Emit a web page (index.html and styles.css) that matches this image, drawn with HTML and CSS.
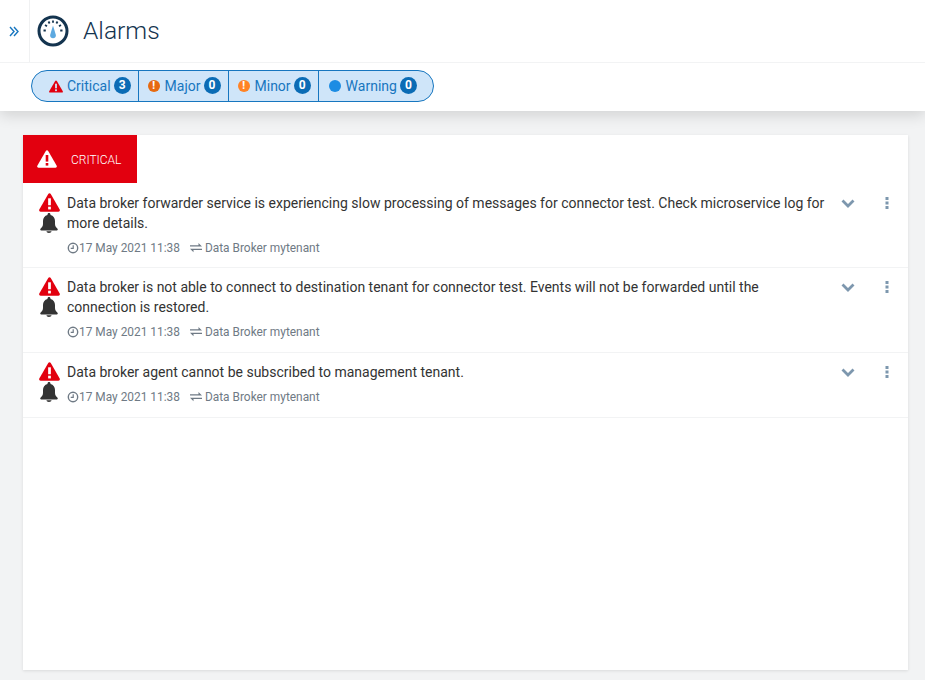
FILE: index.html
```html
<!DOCTYPE html>
<html lang="en">
<head>
<meta charset="utf-8">
<title>Alarms</title>
<link rel="stylesheet" href="styles.css">
<svg class="defs" width="0" height="0">
  <symbol id="tri" viewBox="0 0 20 18"><path d="M10 0.300c.5 0 .9.3 1.200.7l8.500 14.700c.5.900-.1 2-1.200 2H1.500c-1.100 0-1.700-1.100-1.200-2L8.800 1c.3-.4.7-.7 1.200-.7z" fill="currentColor"/><rect x="8.700" y="5" width="2.600" height="6.600" fill="var(--mark)"/><rect x="8.700" y="13" width="2.600" height="2.600" fill="var(--mark)"/></symbol>
  <symbol id="bell" viewBox="0 0 20 20"><path d="M10 0c.9 0 1.500.6 1.500 1.500v.5c2.900.7 4.500 3 4.500 6v3c0 2 1.200 3.500 2.500 4.800.6.600.2 1.700-.7 1.700H2.200c-.9 0-1.300-1.100-.7-1.700C2.800 14.500 4 13 4 11V8c0-3 1.600-5.300 4.500-6v-.5C8.500.6 9.100 0 10 0zM7.500 18.300h5c0 1-1.100 1.700-2.500 1.700s-2.500-.7-2.500-1.700z" fill="currentColor"/></symbol>
  <symbol id="clock" viewBox="0 0 12 12"><circle cx="6" cy="6" r="4.700" fill="none" stroke="currentColor" stroke-width="1.400"/><path d="M6.200 3.200v3.100H3.700" fill="none" stroke="currentColor" stroke-width="1.200"/></symbol>
  <symbol id="swap" viewBox="0 0 12 10"><path d="M0 2.200h8.500V0L12 3.400H0zM12 5.800H0L3.500 9.200V7h8.500z" fill="currentColor"/></symbol>
  <symbol id="chev" viewBox="0 0 14 9"><path d="M1.500 1.500L7 7l5.500-5.500" fill="none" stroke="currentColor" stroke-width="2.800"/></symbol>
  <symbol id="dots" viewBox="0 0 4 12"><rect x="0.500" y="0" width="3" height="3" fill="currentColor"/><rect x="0.500" y="4.500" width="3" height="3" fill="currentColor"/><rect x="0.500" y="9" width="3" height="3" fill="currentColor"/></symbol>
</svg>
</head>
<body>
<header class="topbar">
  <div class="title-row">
    <button class="toggle" type="button">
      <svg width="10" height="11" viewBox="0 0 10 11"><path d="M1 1l4 4.500-4 4.500M5 1l4 4.500-4 4.500" fill="none" stroke="currentColor" stroke-width="1.400"/></svg>
    </button>
    <svg class="gauge" width="32" height="32" viewBox="0 0 32 32">
      <circle cx="16" cy="16" r="14" fill="none" stroke="#14344f" stroke-width="3"/>
      <path d="M6.500 15.500h2.300M8 10l2 1.200M11.500 6.500l1.100 2M16 5.500v2.300M20.500 6.500l-1.100 2M24 10l-2 1.200M25.500 15.500h-2.300" stroke="#14344f" stroke-width="1.800" fill="none"/>
      <path d="M16 10.500l2.800 9.200a2.900 2.900 0 1 1-5.600 0z" fill="#5da9e0"/>
    </svg>
    <h1 class="title">Alarms</h1>
  </div>
  <div class="filter-row">
    <div class="filters">
      <div class="filter first"><svg class="f-tri" width="14" height="13"><use href="#tri"/></svg><span>Critical</span><b class="count">3</b></div>
      <div class="filter"><span class="dot major">!</span><span>Major</span><b class="count">0</b></div>
      <div class="filter"><span class="dot minor">!</span><span>Minor</span><b class="count">0</b></div>
      <div class="filter last"><span class="dot warn"></span><span>Warning</span><b class="count">0</b></div>
    </div>
  </div>
</header>
<main class="content">
  <section class="card">
    <div class="badge"><svg class="b-tri" width="20" height="18"><use href="#tri"/></svg><span>CRITICAL</span></div>
    <article class="alarm">
      <div class="icons"><svg class="i-tri" width="21" height="19"><use href="#tri"/></svg><svg class="i-bell" width="20" height="20"><use href="#bell"/></svg></div>
      <div class="body">
        <p class="msg">Data broker forwarder service is experiencing slow processing of messages for connector test. Check microservice log for more details.</p>
        <p class="meta"><svg class="m-clock" width="12" height="12"><use href="#clock"/></svg>17 May 2021 11:38<svg class="m-swap" width="12" height="10"><use href="#swap"/></svg>Data Broker mytenant</p>
      </div>
      <svg class="chev" width="14" height="9"><use href="#chev"/></svg>
      <svg class="dots" width="4" height="12"><use href="#dots"/></svg>
    </article>
    <article class="alarm">
      <div class="icons"><svg class="i-tri" width="21" height="19"><use href="#tri"/></svg><svg class="i-bell" width="20" height="20"><use href="#bell"/></svg></div>
      <div class="body">
        <p class="msg">Data broker is not able to connect to destination tenant for connector test. Events will not be forwarded until the connection is restored.</p>
        <p class="meta"><svg class="m-clock" width="12" height="12"><use href="#clock"/></svg>17 May 2021 11:38<svg class="m-swap" width="12" height="10"><use href="#swap"/></svg>Data Broker mytenant</p>
      </div>
      <svg class="chev" width="14" height="9"><use href="#chev"/></svg>
      <svg class="dots" width="4" height="12"><use href="#dots"/></svg>
    </article>
    <article class="alarm">
      <div class="icons"><svg class="i-tri" width="21" height="19"><use href="#tri"/></svg><svg class="i-bell" width="20" height="20"><use href="#bell"/></svg></div>
      <div class="body">
        <p class="msg">Data broker agent cannot be subscribed to management tenant.</p>
        <p class="meta"><svg class="m-clock" width="12" height="12"><use href="#clock"/></svg>17 May 2021 11:38<svg class="m-swap" width="12" height="10"><use href="#swap"/></svg>Data Broker mytenant</p>
      </div>
      <svg class="chev" width="14" height="9"><use href="#chev"/></svg>
      <svg class="dots" width="4" height="12"><use href="#dots"/></svg>
    </article>
  </section>
</main>
</body>
</html>
```
FILE: styles.css
```css
* { box-sizing: border-box; }
html, body { height: 100%; }
body {
  margin: 0;
  background: #f2f3f4;
  font-family: Roboto, "Liberation Sans", sans-serif;
  color: #333;
  overflow: hidden;
}
.defs { position: absolute; }
.topbar {
  background: #fff;
  height: 111px;
  box-shadow: 0 4px 14px rgba(0, 0, 0, 0.14);
}
.title-row {
  display: flex;
  align-items: center;
  height: 63px;
  border-bottom: 1px solid #f2f3f4;
}
.toggle {
  width: 30px;
  height: 62px;
  padding: 0 1px 0 0;
  border: 0;
  border-right: 1px solid #f0f1f2;
  background: none;
  color: #1776bf;
  display: flex;
  align-items: center;
  justify-content: center;
}
.gauge { margin-left: 7px; }
.title {
  margin: 0 0 0 14px;
  font-size: 24.6px;
  font-weight: 300;
  color: #14344f;
  line-height: 32px;
}
.filter-row { padding: 7px 0 0 31px; }
.filters {
  display: inline-flex;
  height: 32px;
  border: 1px solid #1776bf;
  border-radius: 16px;
  background: #cfe5f9;
}
.filter {
  display: flex;
  align-items: center;
  height: 30px;
  padding: 0 7px 0 9px;
  border-left: 1px solid #1776bf;
  font-size: 14px;
  color: #1776bf;
  white-space: nowrap;
}
.filter.first { border-left: 0; padding-left: 17px; padding-right: 7px; }
.filter.last { padding-left: 10px; padding-right: 16px; }
.f-tri { color: #e2000f; --mark: #cfe5f9; margin-right: 4px; }
.count {
  width: 17px;
  height: 17px;
  margin-left: 3px;
  margin-top: -2px;
  border-radius: 50%;
  background: #0b6cb5;
  color: #fff;
  font-size: 12px;
  font-weight: 700;
  line-height: 17px;
  text-align: center;
}
.dot {
  width: 12px;
  height: 12px;
  margin-right: 5px;
  border-radius: 50%;
  color: #fff;
  font-size: 10px;
  font-weight: 900;
  line-height: 12px;
  text-align: center;
}
.major { background: #e66a10; }
.minor { background: #ff8326; }
.warn { background: #1c8ce3; }
.content { padding: 24px 17px 10px 23px; height: 569px; }
.card {
  height: 100%;
  background: #fff;
  box-shadow: 0 1px 3px rgba(0, 0, 0, 0.1);
}
.badge {
  display: flex;
  align-items: center;
  width: 114px;
  height: 48px;
  padding-left: 14px;
  background: #e2000f;
  color: #fff;
  font-size: 12px;
  font-weight: 300;
  --mark: #e2000f;
}
.badge span { margin: 1px 0 0 14px; }
.alarm {
  display: flex;
  align-items: flex-start;
  padding: 9.6px 0 11.25px 16px;
  border-bottom: 1px solid #f2f3f4;
}
.icons {
  display: flex;
  flex-direction: column;
  width: 21px;
  flex: none;
}
.i-tri { color: #e2000f; --mark: #fff; }
.i-bell { color: #333; margin-top: 1px; }
.body { margin-left: 7px; width: 762px; flex: none; }
.msg {
  margin: 0;
  font-size: 14px;
  line-height: 20px;
  color: #333;
}
.meta {
  display: flex;
  align-items: center;
  margin: 7px 0 0;
  height: 16px;
  font-size: 11.9px;
  color: #6f7a85;
}
.m-clock { margin-right: 0; }
.m-swap { margin: 0 3px 0 10px; }
.chev { flex: none; margin: 6px 0 0 12px; color: #7d97ae; }
.dots { flex: none; margin: 4px 0 0 30px; color: #7d97ae; }
```
